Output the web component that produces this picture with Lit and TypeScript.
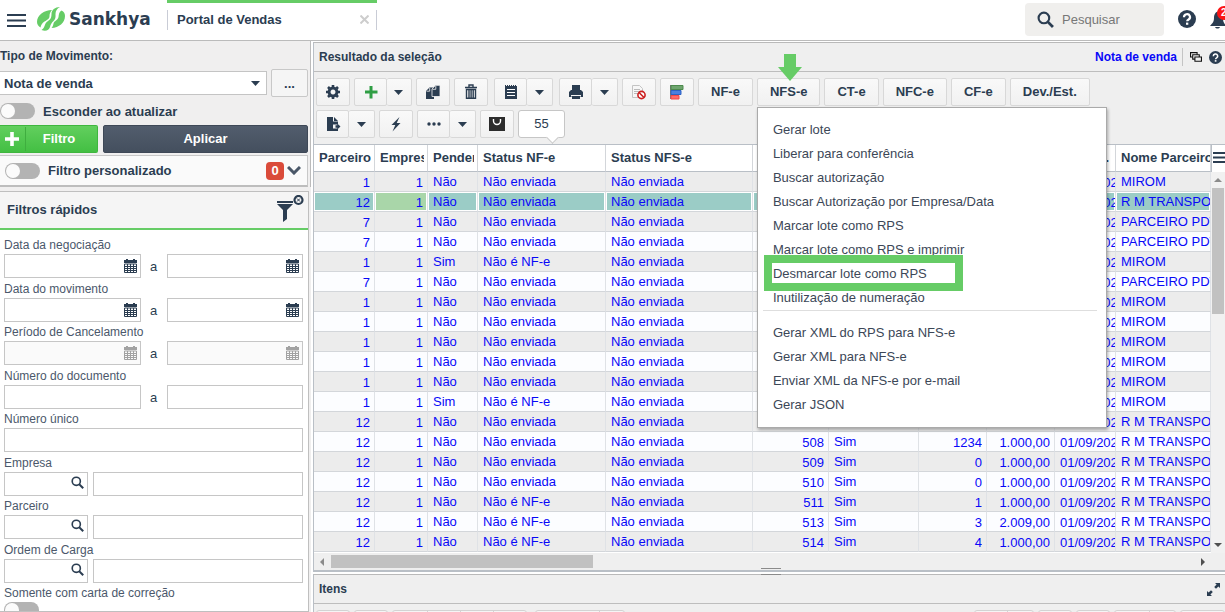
import { LitElement, html, css, svg, nothing, TemplateResult } from "lit";
import { customElement, property } from "lit/decorators.js";
import { classMap } from "lit/directives/class-map.js";

const caret = html`<svg class="caret" width="10" height="5" viewBox="0 0 10 5"><path d="M0 0h9L4.500 5z" fill="currentColor"/></svg>`;

const glyphs: Record<string, TemplateResult> = {
  gear: svg`<path fill="none" stroke="currentColor" stroke-width="3" d="M8 4a4 4 0 1 0 .01 0z"/><path fill="none" stroke="currentColor" stroke-width="2.600" d="M8 1v2M8 13v2M1 8h2M13 8h2M3 3l1.500 1.500M11.500 11.500L13 13M13 3l-1.500 1.500M4.500 11.500L3 13"/>`,
  plus: svg`<path fill="#2f9e44" d="M6.500 2h3v4.600H14.500v2.800H9.500V14.500h-3V9.400H2V6.600h4.500z"/>`,
  copy: svg`<path fill="currentColor" d="M1 7l3.500-3.500H9V15H1z"/><path fill="currentColor" stroke="#f5f5f5" stroke-width=".8" d="M7 5l3.500-3.700H15V12.500H7z"/><path d="M1.500 7.200H4.700V4M7.500 5.300h3.300V2" fill="none" stroke="#f5f5f5" stroke-width=".8"/>`,
  trash: svg`<path fill="none" stroke="currentColor" stroke-width="1.400" d="M2 3.500h12M6 3V1h4v2M3.500 5.500h9V14.300h-9zM6 6v8M8.100 6v8M10.200 6v8"/>`,
  list: svg`<path fill="currentColor" d="M2 1h1v1h1V1h1v1h1V1h1v1h1V1h1v1h1V1h1v1h1V1h1v1h1v13H2z"/><path stroke="#fff" stroke-width="1.200" d="M4 5.500h8M4 8.500h8M4 11.500h8"/>`,
  print: svg`<path fill="currentColor" d="M4 1h8v5h1l2 2v5h-2.500v-2h-9v2H1V8l2-2h1z"/><path fill="currentColor" d="M4 12h8v3H4z"/><path stroke="#f5f5f5" stroke-width="1" d="M3 11.500h10"/>`,
  block: svg`<path fill="#f7f7f7" stroke="#c4c4c4" d="M1.500 1.500h7l3 3v9h-10z"/><path stroke="#bbb" d="M3 5.500h6M3 7.500h6M3 9.500h4"/><circle cx="10.500" cy="11" r="3.600" fill="#fff" stroke="#cc1f1f" stroke-width="1.600"/><path stroke="#cc1f1f" stroke-width="1.600" d="M8 8.500l5 5"/>`,
  chart: svg`<path stroke="#777" d="M1.500 1v14"/><path fill="#6ea56e" stroke="#4d8a4d" d="M2 1.500h12v4H2z"/><path fill="#4a7fe0" stroke="#2d62c4" d="M2 6.500h10v4H2z"/><path fill="#ff6a6a" stroke="#f04848" d="M2 11.500h8v3.500H2z"/>`,
  exportDoc: svg`<path fill="currentColor" d="M2 1h6v4.500h5v3H8v4h5V15H2z"/><path fill="currentColor" d="M9 1l4 4H9zM10.500 9.200h1.800V7.400L15.500 10.500l-3.200 3.100v-1.800h-1.800z"/>`,
  bolt: svg`<path fill="currentColor" d="M11.500 1L3.500 9h3.800L4.500 15.500 12.500 7H8.700z"/>`,
  dots: svg`<circle cx="3" cy="8" r="1.700"/><circle cx="8" cy="8" r="1.700"/><circle cx="13" cy="8" r="1.700"/>`,
  bag: svg`<path fill="#2c2c2c" d="M0 1h16v14H0z"/><path fill="none" stroke="#fff" stroke-width="1.400" d="M4.500 3v2a3.500 3.500 0 0 0 7 0V3"/>`,
};

const glyph = (name: string) =>
  html`<svg width="16" height="16" viewBox="0 0 16 16" fill="currentColor" aria-hidden="true">${glyphs[name]}</svg>`;

const lens = (size: number) => html`<svg width=${size} height=${size} viewBox="0 0 16 16" aria-hidden="true">
  <circle cx="6.500" cy="6.500" r="5" fill="none" stroke="currentColor" stroke-width="2"/>
  <path d="M10 10l5 5" stroke="currentColor" stroke-width="2.600"/></svg>`;

const help = (size: number) => html`<svg width=${size} height=${size} viewBox="0 0 18 18" aria-hidden="true">
  <circle cx="9" cy="9" r="9" fill="currentColor"/>
  <path d="M6 7.200a3 2.900 0 1 1 4.600 2.300C9.500 10.200 9.200 10.400 9.200 11.300" fill="none" stroke="#fff" stroke-width="2.200"/>
  <path d="M8 12.600h2.300v2.200H8z" fill="#fff"/></svg>`;

const calendar = html`<svg class="cal" width="13" height="14" viewBox="0 0 13 14" aria-hidden="true">
  <path fill="currentColor" d="M0 1h2V0h2v1h5V0h2v1h2v3H0z"/>
  <path fill="none" stroke="currentColor" d="M.5 5v8.500h12V5zM.5 7.500h12M.5 9.500h12M.5 11.500h12M3.500 5v8M6.500 5v8M9.500 5v8"/></svg>`;

const shared = css`
  :host { display: block; box-sizing: border-box; }
  *, *::before, *::after { box-sizing: border-box; }
  button, input, select { font: inherit; color: inherit; margin: 0; padding: 0; }
  svg { display: block; flex: none; }
  .toggle { appearance: none; flex: none; width: 35px; height: 16px; border-radius: 8px; background: #b3b3b3; display: block; }
  .toggle::before { content: ""; display: block; width: 14px; height: 14px; margin: 1px; border-radius: 50%; background: #fbfbfb; }
`;

@customElement("top-bar")
class TopBar extends LitElement {
  static styles = [shared, css`
    :host { display: flex; height: 41px; background: #fff; border-bottom: 1px solid #bbb; overflow: hidden; }
    .menu { border: 0; background: none; width: 19px; height: 13px; margin: 14px 11px 0 7px; }
    .brand { display: flex; gap: 4px; height: 38px; align-items: center; width: 130px; font: bold 17px "DejaVu Sans", sans-serif; color: #2b3d51; text-decoration: none; }
    .tab { display: flex; width: 210px; height: 40px; border-top: 3px solid #66cc66; justify-content: space-between; }
    .tab-body { flex: 1; display: flex; align-items: center; justify-content: space-between; height: 20px; margin-top: 7px; padding: 0 7px 2px 9px; border: solid #c9ccd6; border-width: 0 1px; font-weight: bold; }
    .close { border: 0; background: none; height: 9px; }
    .search { display: flex; align-items: center; gap: 8px; width: 139px; height: 33px; margin: 3px 14px 0 auto; padding-left: 12px; background: #f0efed; border-radius: 4px; }
    .search input { border: 0; background: none; width: 90px; outline: 0; }
    .search input::placeholder { color: #777; opacity: 1; }
    .round { border: 0; background: none; width: 18px; height: 18px; margin: 10px 14px 0 0; }
    .bell { position: relative; border: 0; background: none; width: 15px; height: 18px; margin-top: 11px; }
    .count { position: absolute; left: 7px; top: -5px; width: 16px; height: 14px; padding-left: 4px; border-radius: 7px; background: #fb1414; color: #fff; font: bold 10px/14px "Liberation Sans", sans-serif; text-align: left; }
  `];
  render() {
    return html`
      <button class="menu" aria-label="Menu"><svg width="19" height="13" viewBox="0 0 19 13"><path stroke="#2b3d51" stroke-width="2" d="M0 1h19M0 6.500h19M0 12h19"/></svg></button>
      <a class="brand" href="#">
        <svg width="28" height="24" viewBox="0 0 28 24" fill="#66cc66">
          <path d="M15 3C7 3 0 8 0 15c0 2.500 1.500 4.500 3.500 5.500C4 18 5 16 7.500 14.500 12 12 12.500 11 12.500 9c0-2.500 1-4.500 2.500-6z"/>
          <path d="M23 0c-5 0-8.500 3-8.500 7 0 3-.5 5-3.500 7-4 2.500-2.500 6.500-6.500 9 4 1.800 7.500.5 8.500-3 .8-3 1.500-4 3.500-6 2.500-2.300 2-4.500 2-7 0-3 1.500-5.500 4.500-7z"/>
          <path d="M24.500 3.500c2.500 1 3.500 3 3.500 5.500 0 7-6 11.500-13.500 12 1.300-1.500 1.700-3 2-4.500.5-2.500 4.500-3.500 5-6.500.4-3 .5-5 3-6.500z"/>
        </svg>Sankhya</a>
      <div class="tab"><div class="tab-body"><span>Portal de Vendas</span>
        <button class="close" aria-label="Fechar"><svg width="9" height="9" viewBox="0 0 9 9"><path d="M.5.5l8 8M8.500.5l-8 8" stroke="#cdcdcd" stroke-width="2"/></svg></button></div></div>
      <label class="search">${lens(17)}<input type="text" placeholder="Pesquisar" aria-label="Pesquisar"></label>
      <button class="round" aria-label="Ajuda">${help(18)}</button>
      <button class="bell" aria-label="Avisos"><svg width="18" height="18" viewBox="0 0 18 18" fill="currentColor"><path d="M9 0C5 1 4 4 4 7c0 4-1.500 5-4 8h16c-2-3-3-4-3-8 0-3-1-6-4-7zM5 16h5c-.5 1-1.500 1.500-2.500 1.500S5.500 17 5 16z"/></svg><span class="count">2</span></button>`;
  }
}

type Kind = "date" | "off" | "range" | "text" | "lookup" | "toggle";
const filters: [string, Kind][] = [
  ["Data da negociação", "date"],
  ["Data do movimento", "date"],
  ["Período de Cancelamento", "off"],
  ["Número do documento", "range"],
  ["Número único", "text"],
  ["Empresa", "lookup"],
  ["Parceiro", "lookup"],
  ["Ordem de Carga", "lookup"],
  ["Somente com carta de correção", "toggle"],
];

@customElement("filter-panel")
class FilterPanel extends LitElement {
  static styles = [shared, css`
    :host { display: flex; flex-direction: column; background: #f0efef; min-height: 0; overflow: hidden; }
    .top { height: 146px; padding-right: 2px; border-right: 1px solid #bbb; flex: none; font-weight: bold; }
    .type { display: block; font-size: 12px; line-height: 14px; padding-top: 8px; height: 28px; }
    .row { display: flex; align-items: center; }
    .pick { position: relative; flex: 1; height: 24px; margin-right: 4px; }
    .pick select { appearance: none; width: 100%; height: 24px; border: 1px solid #c4c4c4; border-left: 0; border-radius: 0; background: #fff; padding-left: 4px; }
    .pick .caret { position: absolute; right: 6px; top: 10px; pointer-events: none; }
    .more { width: 37px; height: 28px; border: 1px solid #c8c8c8; border-radius: 2px; background: #f5f5f5; }
    .hide { display: flex; gap: 8px; align-items: center; height: 28px; }
    .actions { display: flex; gap: 5px; color: #fff; height: 28px; }
    .add { display: flex; align-items: center; width: 98px; border: 1px solid #3fb63f; border-left: 0; border-radius: 0 2px 2px 0; background: linear-gradient(#62cf5e, #43bf43); }
    .add svg { width: 26px; height: 24px; padding: 5px 6px 5px 5px; border-right: 1px solid #3fae3f; }
    .add span { flex: 1; padding: 0 5px 2px 0; }
    .apply { flex: 1; padding-bottom: 1px; border: 1px solid #3e4857; border-radius: 2px; background: linear-gradient(#525d6d, #444f5e); }
    .custom { display: flex; align-items: center; gap: 8px; height: 32px; margin-top: 2px; padding-left: 5px; border: 1px solid #c8c8c8; border-left: 0; border-bottom: 2px solid #bdbdbd; background: #fafafa; }
    .custom label { flex: 1; }
    .badge { width: 18px; height: 18px; border-radius: 4px; background: #da4b3a; color: #fff; text-align: center; line-height: 18px; margin-right: -5px; }
    .chev { border: 0; background: none; margin-right: 6px; }
    .quick { flex: 1; min-height: 0; margin: 4px 2px 0 0; border: 1px solid #bfbfbf; border-left: 0; background: #fff; overflow: hidden; }
    .title { display: flex; justify-content: space-between; height: 38px; border-bottom: 2px solid #66cc66; background: #f5f5f5; padding: 3px 4px 0 7px; }
    h2 { margin: 0; font-size: 13px; line-height: 30px; }
    .clear { border: 0; background: none; height: 27px; }
    .list { padding: 8px 5px 0 4px; }
    .field { height: 44px; }
    .field:nth-child(even) { height: 43px; }
    .name { display: block; font-size: 12px; line-height: 14px; height: 16px; color: #4b586b; }
    .pair { display: grid; grid-template-columns: 1fr 26px 1fr; align-items: center; text-align: center; }
    .look { display: grid; grid-template-columns: 84px 1fr; gap: 5px; }
    .box { position: relative; display: block; height: 24px; }
    .box input { display: block; width: 100%; height: 24px; border: 1px solid #c6c6c6; border-radius: 0; background: #fff; padding: 0 4px; }
    .box input:disabled { background: #fafafa; }
    .cal { position: absolute; right: 4px; top: 5px; }
    .off .cal { color: #a2a2a2; }
    .find { position: absolute; right: 4px; top: 4px; border: 0; background: none; }
  `];
  box(label: string, kind: Kind, find = false) {
    return html`<span class="box"><input type="text" aria-label=${label} ?disabled=${kind === "off"}>
      ${kind === "date" || kind === "off" ? calendar : nothing}
      ${find ? html`<button class="find" aria-label="Buscar ${label}">${lens(13)}</button>` : nothing}</span>`;
  }
  control(label: string, kind: Kind) {
    if (kind === "text") return this.box(label, kind);
    if (kind === "toggle") return html`<input class="toggle" type="checkbox" aria-label=${label}>`;
    if (kind === "lookup") return html`<div class="look">${this.box(label, kind, true)}${this.box(label, kind)}</div>`;
    return html`<div class="pair ${kind}">${this.box(label, kind)}<span>a</span>${this.box(label, kind)}</div>`;
  }
  render() {
    return html`
      <div class="top">
        <label class="type" for="type">Tipo de Movimento:</label>
        <div class="row"><span class="pick"><select id="type"><option>Nota de venda</option></select>${caret}</span>
          <button class="more">...</button></div>
        <label class="hide"><input class="toggle" type="checkbox">Esconder ao atualizar</label>
        <div class="actions">
          <button class="add"><svg viewBox="0 0 14 14"><path d="M7 0v14M0 7h14" stroke="#fff" stroke-width="3.600"/></svg><span>Filtro</span></button>
          <button class="apply">Aplicar</button>
        </div>
        <div class="custom"><input class="toggle" type="checkbox" id="custom"><label for="custom">Filtro personalizado</label>
          <span class="badge">0</span>
          <button class="chev" aria-label="Expandir"><svg width="14" height="9" viewBox="0 0 14 9"><path d="M1 1l6 6 6-6" fill="none" stroke="#4a5768" stroke-width="3"/></svg></button></div>
      </div>
      <section class="quick">
        <div class="title"><h2>Filtros rápidos</h2>
          <button class="clear" aria-label="Limpar filtros"><svg width="27" height="27" viewBox="0 0 27 27"><path fill="currentColor" d="M0 6h16v3l-6 6v9l-4 3V15L0 9z"/><path stroke="#f5f5f5" d="M0 8.500h16"/><circle cx="21.500" cy="5" r="4" fill="none" stroke="currentColor" stroke-width="2.200"/><path d="M20 3.500l3 3M23 3.500l-3 3" stroke="currentColor"/></svg></button></div>
        <div class="list">${filters.map(([label, kind]) => html`<div class="field"><span class="name">${label}</span>${this.control(label, kind)}</div>`)}</div>
      </section>`;
  }
}

const menuItems = [
  ["Gerar lote", "Liberar para conferência", "Buscar autorização", "Buscar Autorização por Empresa/Data", "Marcar lote como RPS", "Marcar lote como RPS e imprimir", "Desmarcar lote como RPS", "Inutilização de numeração"],
  ["Gerar XML do RPS para NFS-e", "Gerar XML para NFS-e", "Enviar XML da NFS-e por e-mail", "Gerar JSON"],
];

@customElement("action-bar")
class ActionBar extends LitElement {
  static styles = [shared, css`
    :host { padding: 6px 2px; background: #efefef; }
    .line { display: flex; gap: 4px; height: 28px; margin-bottom: 4px; }
    .line:last-child { margin: 0; }
    button { display: flex; align-items: center; justify-content: center; width: 34px; height: 28px; border: 1px solid #d8d8d8; border-radius: 2px; background: linear-gradient(#f9f9f9, #f1f1f1); font-weight: bold; }
    .split { display: flex; }
    .split button { width: 33px; }
    .split button + button { width: 26px; border-left: 0; }
    .split.slim button + button { width: 25px; }
    .wide { margin-left: 2px; }
    .text { width: auto; padding: 0 12px 2px; }
    .anchor { position: relative; z-index: 5; }
    .pointer { position: absolute; left: 20px; top: -24px; }
    .menu { position: absolute; left: 0; top: 29px; width: 350px; margin: 0; padding: 10px 0; list-style: none; border: 1px solid #aaa; background: #fff; box-shadow: 1px 2px 3px rgba(0,0,0,.3); }
    .menu li { height: 24px; padding-left: 15px; line-height: 24px; color: #3c4757; }
    .menu .rule { height: 1px; margin: 0 9px 10px 5px; background: #dedede; }
    .menu a { color: inherit; text-decoration: none; }
    .marked { position: relative; }
    .marked::after { content: ""; position: absolute; inset: -7px auto -5px 6px; width: 199px; border: 8px solid #66cc66; }
    .bubble { position: relative; width: 47px; height: 28px; border: 1px solid #c6c6c6; border-radius: 3px; background: #fff; text-align: center; line-height: 26px; }
    .bubble::after { content: ""; position: absolute; left: 29px; bottom: -5px; width: 9px; height: 9px; background: #fff; border: solid #c6c6c6; border-width: 0 1px 1px 0; transform: rotate(45deg); }
  `];
  btn(name: string, label: string) { return html`<button aria-label=${label}>${glyph(name)}</button>`; }
  split(name: string, label: string, kind = "") {
    return html`<div class=${classMap({ split: true, wide: kind === "wide", slim: kind === "slim" })}>${this.btn(name, label)}<button aria-label="Opções">${caret}</button></div>`;
  }
  render() {
    return html`
      <div class="line">
        ${this.btn("gear", "Configurar")}${this.split("plus", "Adicionar", "slim")}${this.btn("copy", "Duplicar")}${this.btn("trash", "Excluir")}
        ${this.split("list", "Lista", "wide")}${this.split("print", "Imprimir", "wide")}${this.btn("block", "Cancelar")}${this.btn("chart", "Gráfico")}
        <button class="text">NF-e</button>
        <div class="anchor"><button class="text" aria-haspopup="true">NFS-e</button>
          <svg class="pointer" width="26" height="28" viewBox="0 0 26 28"><path fill="#66cc66" d="M7 0h12v13h6L13 27 1 13h6z"/></svg>
          <ul class="menu">${menuItems.map((group, i) => html`${i ? html`<li class="rule" role="separator"></li>` : nothing}
            ${group.map(t => html`<li class=${classMap({ marked: t === "Desmarcar lote como RPS" })}><a href="#">${t}</a></li>`)}`)}</ul>
        </div>
        ${["CT-e", "NFC-e", "CF-e", "Dev./Est."].map(t => html`<button class="text">${t}</button>`)}
      </div>
      <div class="line">
        ${this.split("exportDoc", "Exportar")}${this.btn("bolt", "Ações")}${this.split("dots", "Mais")}${this.btn("bag", "Loja")}
        <div class="bubble">55</div>
      </div>`;
  }
}

const headers = ["Parceiro", "Empresa", "Pendente", "Status NF-e", "Status NFS-e", "", "", "", "", "Dt. Neg.", "Nome Parceiro"];
const numeric = new Set([0, 1, 5, 7, 8]);
const TRANSP = "R M TRANSPORTES";
const entry = (code: string, pending: string, nfe: string, name: string, no = "", rps = "", seq = "", total = "") =>
  [code, "1", pending, nfe, "Não enviada", no, rps, seq, total, "01/09/2021", name];
const NE = "Não enviada";
const NNF = "Não é NF-e";
const records = [
  entry("1", "Não", NE, "MIROM"),
  entry("12", "Não", NE, TRANSP),
  entry("7", "Não", NE, "PARCEIRO PDV"),
  entry("7", "Não", NE, "PARCEIRO PDV"),
  entry("1", "Sim", NNF, "MIROM"),
  entry("7", "Não", NE, "PARCEIRO PDV"),
  entry("1", "Não", NE, "MIROM"),
  entry("1", "Não", NE, "MIROM"),
  entry("1", "Não", NE, "MIROM"),
  entry("1", "Não", NE, "MIROM"),
  entry("1", "Não", NE, "MIROM"),
  entry("1", "Sim", NNF, "MIROM"),
  entry("12", "Não", NE, TRANSP),
  entry("12", "Não", NE, TRANSP, "508", "Sim", "1234", "1.000,00"),
  entry("12", "Não", NE, TRANSP, "509", "Sim", "0", "1.000,00"),
  entry("12", "Não", NE, TRANSP, "510", "Sim", "0", "1.000,00"),
  entry("12", "Não", NNF, TRANSP, "511", "Sim", "1", "1.000,00"),
  entry("12", "Não", NNF, TRANSP, "513", "Sim", "3", "2.009,00"),
  entry("12", "Não", NNF, TRANSP, "514", "Sim", "4", "1.000,00"),
];

@customElement("data-grid")
class DataGrid extends LitElement {
  @property({ type: Number }) selected = 1;
  static styles = [shared, css`
    :host { display: flex; flex-direction: column; min-height: 0; border-top: 1px solid #b9bfc6; background: #efefef; }
    .body { display: flex; flex: 1; min-height: 0; overflow: hidden; }
    .view { flex: 1; min-width: 0; overflow: hidden; background: #fff; }
    table { width: 100%; table-layout: fixed; border-spacing: 0; color: #0808f8; }
    .c0 { width: 61px; } .c1 { width: 53px; } .c2 { width: 50px; } .c3 { width: 128px; } .c4 { width: 147px; }
    .c5 { width: 76px; } .c6 { width: 90px; } .c7, .c8 { width: 68px; } .c9 { width: 61px; }
    th { height: 27px; padding: 0 3px 2px 5px; text-align: left; background: #fff; color: #2b3d51; border-right: 1px solid #d3d6da; border-bottom: 1px solid #b9bfc6; }
    td { height: 20px; padding: 0 0 0 5px; border-right: 1px solid #dfe2e6; border-bottom: 1px solid #d3d6da; background: #fcfdff; }
    th:last-child { padding-right: 0; }
    tr:nth-child(odd) td { background: #ececec; }
    .num { padding: 1px 4px 0 0; text-align: right; }
    .low { padding-top: 1px; }
    .clip { overflow: hidden; white-space: nowrap; line-height: 17px; }
    tr.on td { background: #9bccc6; box-shadow: inset 0 1px #fff, inset 1px 0 #fff, inset -1px 0 #fff, inset 0 -1px #fff; }
    tr.on td:nth-child(2) { background: #a9d6a9; }
    .side { width: 14px; display: flex; flex-direction: column; align-items: center; background: #f1f1f1; color: #8b8b8b; }
    .cols { width: 14px; height: 27px; border: 0; border-left: 1px solid #b9bfc6; background: #fff; color: #2b3d51; padding: 0 0 3px 1px; flex: none; }
    .side > svg { margin: 6px 0; }
    .vthumb { width: 12px; height: 31%; margin-bottom: auto; background: #c1c1c1; }
    .side > svg:last-child { color: #505050; }
    .hbar { display: flex; align-items: center; height: 17px; padding-left: 6px; flex: none; color: #8b8b8b; }
    .hthumb { width: 29%; height: 13px; margin: 0 auto 0 7px; background: #c1c1c1; }
    .right { color: #505050; margin-right: 20px; }
  `];
  render() {
    return html`
      <div class="body">
        <div class="view"><table>
          <colgroup>${headers.map((_, i) => html`<col class="c${i}">`)}</colgroup>
          <thead><tr>${headers.map(h => html`<th scope="col"><div class="clip">${h}</div></th>`)}</tr></thead>
          <tbody>${records.map((r, n) => html`<tr class=${classMap({ on: n === this.selected })}>${r.map((v, i) =>
            html`<td class=${classMap({ num: numeric.has(i), low: i === 9 })}><div class="clip">${v}</div></td>`)}</tr>`)}</tbody>
        </table></div>
        <div class="side">
          <button class="cols" aria-label="Colunas"><svg width="12" height="11" viewBox="0 0 12 11"><path stroke="currentColor" stroke-width="2" d="M0 1h12M0 5.500h12M0 10h12"/></svg></button>
          <svg width="8" height="4" viewBox="0 0 8 4"><path fill="currentColor" d="M4 0l4 4H0z"/></svg>
          <div class="vthumb"></div>
          <svg width="8" height="4" viewBox="0 0 8 4"><path fill="currentColor" d="M4 4l4-4H0z"/></svg>
        </div>
      </div>
      <div class="hbar">
        <svg width="4" height="8" viewBox="0 0 4 8"><path fill="currentColor" d="M0 4l4-4v8z"/></svg>
        <div class="hthumb"></div>
        <svg class="right" width="4" height="8" viewBox="0 0 4 8"><path fill="currentColor" d="M4 4L0 0v8z"/></svg>
      </div>`;
  }
}

const itemTools = [[34], [34], [34, 33, 33, 33], [63, 25], [32, 26], [34], [34], [34, 26], [45]];

@customElement("app-root")
class AppRoot extends LitElement {
  static styles = [shared, css`
    :host { display: flex; flex-direction: column; height: 100vh; overflow: hidden; background: #fff; color: #2b3d51; font: 13px "Liberation Sans", Arial, sans-serif; }
    main { flex: 1; min-height: 0; display: grid; grid-template-columns: 311px 1fr; grid-template-rows: 100%; gap: 2px; }
    .work { display: flex; flex-direction: column; min-width: 0; padding-top: 1px; }
    .panel { display: flex; flex-direction: column; border-left: 1px solid #b9bfc6; border-top: 1px solid #b9b9b9; background: #efefef; min-height: 0; }
    .results { flex: 1; border-bottom: 2px solid #b9bfc6; }
    .bar { display: flex; align-items: center; height: 29px; padding: 0 3px 0 5px; border-bottom: 1px solid #bdbdbd; flex: none; }
    h1, h2 { margin: 0 auto 0 0; font-size: 12px; font-weight: bold; }
    .link { font-size: 12px; font-weight: bold; color: #0808f8; text-decoration: none; padding-right: 5px; border-right: 1px solid #c4c4c4; line-height: 18px; }
    .bar button { border: 0; background: none; margin-left: 7px; }
    data-grid { flex: 1; }
    .items { position: relative; height: 38px; margin-top: 2px; flex: none; }
    .grip { position: absolute; left: 447px; top: -7px; width: 20px; height: 7px; border: solid #8b8b8b; border-width: 1px 0; }
    .tools { display: flex; gap: 4px; padding: 6px 0 0 2px; height: 8px; overflow: hidden; }
    .set { display: flex; flex: none; height: 28px; border: 1px solid #d3d3d3; border-radius: 3px; background: #f5f5f5; }
    .set:nth-child(4) { margin: 0 auto 0 4px; }
    .seg + .seg { border-left: 1px solid #d3d3d3; }
  `];
  render() {
    return html`
      <top-bar></top-bar>
      <main>
        <filter-panel></filter-panel>
        <div class="work">
          <section class="panel results">
            <div class="bar"><h1>Resultado da seleção</h1><a class="link" href="#">Nota de venda</a>
              <button aria-label="Janelas"><svg width="12" height="11" viewBox="0 0 11 10" fill="#efefef" stroke="#111"><path d="M.5.5h6v4h-6z"/><path d="M2.500 2.500h6v4h-6z"/><path d="M4.500 4.500h6v4h-6z"/></svg></button>
              <button aria-label="Ajuda">${help(13)}</button></div>
            <action-bar></action-bar>
            <data-grid></data-grid>
          </section>
          <section class="panel items"><span class="grip"></span>
            <div class="bar"><h2>Itens</h2>
              <button aria-label="Expandir"><svg width="15" height="13" viewBox="0 0 15 13" fill="currentColor"><path d="M8 0h5v5l-1.600-1.600L9 5.800 7.200 4l2.400-2.400zM5 13H0V8l1.600 1.600L4 7.200 5.800 9l-2.400 2.400z"/></svg></button></div>
            <div class="tools">${itemTools.map(g => html`<div class="set">${g.map(w => html`<span class="seg" style="width:${w - (g.length > 1 ? 0 : 2)}px"></span>`)}</div>`)}</div>
          </section>
        </div>
      </main>`;
  }
}
